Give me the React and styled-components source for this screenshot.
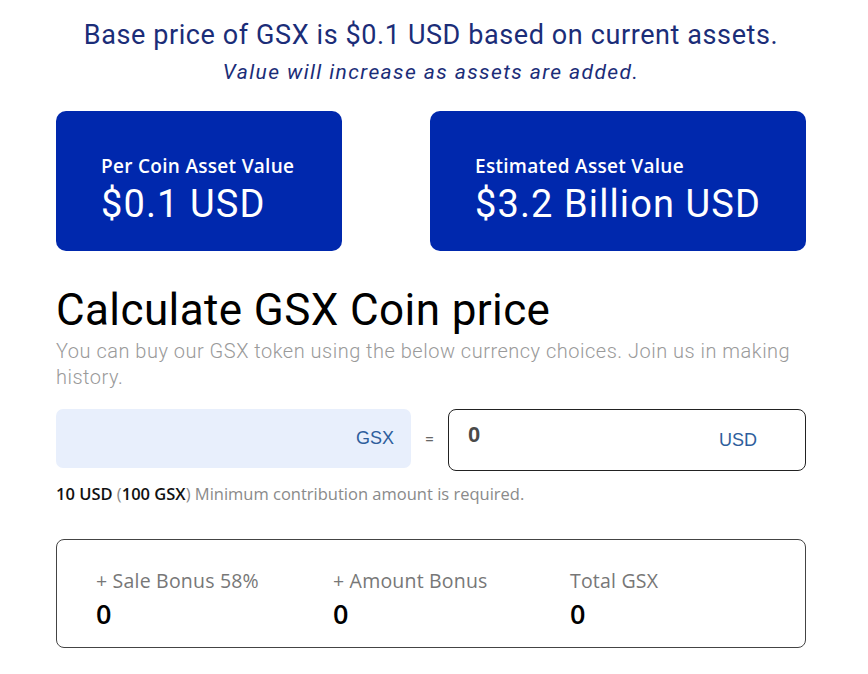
import styled, { createGlobalStyle } from "styled-components";

const GlobalStyle = createGlobalStyle`
  * { box-sizing: border-box; }
  body {
    margin: 0;
    background: #fff;
    font-family: Roboto, "Liberation Sans", sans-serif;
  }
`

const Page = styled.div`
  width : 750px;
  margin-left : 56px;
  padding-top : 18px;
  display : flex;
  flex-direction : column;
`

const Headline = styled.div`
  text-align : center;
  color : #1b2d78;
  font-size : 27px;
  letter-spacing : 0.6px;
  line-height : 34px;
`

const SubHeadline = styled.div`
  margin-top : 5px;
  text-align : center;
  color : #1b2d78;
  font-size : 21px;
  letter-spacing : 1.4px;
  font-style : italic;
  line-height : 30px;
`

const CardRow = styled.div`
  display : flex;
  justify-content : space-between;
  margin-top : 24px;
`

const ValueCard = styled.div`
  width : ${(props) => props.width};
  height : 140px;
  background-color : #0028ad;
  border-radius : 10px;
  padding : 43px 0 0 45px;
  color : #fff;
`

const CardLabel = styled.div`
  font-family : "Open Sans", Lato, sans-serif;
  font-weight : 600;
  font-size : 19px;
  letter-spacing : 0.3px;
  line-height : 24px;
`

const CardValue = styled.div`
  font-size : 38px;
  letter-spacing : 1.1px;
  line-height : 42px;
  margin-top : 5px;
`

const Title = styled.h1`
  margin : 33px 0 0 0;
  font-weight : 400;
  font-size : 44px;
  letter-spacing : 0.4px;
  line-height : 52px;
  color : #000;
`

const Subtitle = styled.p`
  margin : 2px 0 0 0;
  font-size : 20px;
  letter-spacing : 0.5px;
  line-height : 26px;
  color : #9a9a9a;
  font-weight : 300;
`

const ConvertRow = styled.div`
  display : flex;
  align-items : flex-start;
  margin-top : 19px;
`

const GsxField = styled.div`
  width : 355px;
  height : 59px;
  background-color : #e8effc;
  border-radius : 7px;
  display : flex;
  align-items : center;
  justify-content : flex-end;
  padding-right : 17px;
`

const Unit = styled.span`
  color : #2e5e9c;
  font-family : "Liberation Sans", Arial, sans-serif;
  font-size : 18px;
`

const Equals = styled.div`
  width : 37px;
  height : 59px;
  display : flex;
  align-items : center;
  justify-content : center;
  color : #666;
  font-size : 17px;
`

const UsdField = styled.div`
  width : 358px;
  height : 62px;
  border : 1px solid #222;
  border-radius : 8px;
  display : flex;
  justify-content : space-between;
  padding : 12px 48px 0 19px;
`

const Amount = styled.span`
  font-family : "Liberation Sans", Arial, sans-serif;
  font-weight : 700;
  font-size : 22px;
  color : #4a4a4a;
`

const UsdUnit = styled(Unit)`
  margin-top : 8px;
`

const Note = styled.div`
  margin-top : 13px;
  font-family : "Open Sans", sans-serif;
  font-size : 16.5px;
  line-height : 20px;
  color : #8a8a8a;
  b {
    color : #111;
    font-weight : 600;
  }
`

const BonusBox = styled.div`
  margin-top : 35px;
  height : 109px;
  border : 1px solid #444;
  border-radius : 8px;
  display : grid;
  grid-template-columns : 237px 237px 1fr;
  padding : 30px 0 0 39px;
`

const BonusItem = styled.div`
  display : flex;
  flex-direction : column;
`

const BonusLabel = styled.div`
  font-family : "Open Sans", sans-serif;
  font-size : 19.5px;
  letter-spacing : 0.2px;
  line-height : 22px;
  color : #777;
`

const BonusValue = styled.div`
  font-family : "Open Sans", sans-serif;
  font-weight : 600;
  font-size : 27px;
  line-height : 32px;
  margin-top : 6px;
  color : #000;
`

const bonuses = [
  { label: '+ Sale Bonus 58%', value: 0 },
  { label: '+ Amount Bonus', value: 0 },
  { label: 'Total GSX', value: 0 },
]

const App = () => {
  return (
    <>
      <GlobalStyle />
      <Page>
        <Headline>Base price of GSX is $0.1 USD based on current assets.</Headline>
        <SubHeadline>Value will increase as assets are added.</SubHeadline>
        <CardRow>
          <ValueCard width="286px">
            <CardLabel>Per Coin Asset Value</CardLabel>
            <CardValue>$0.1 USD</CardValue>
          </ValueCard>
          <ValueCard width="376px">
            <CardLabel>Estimated Asset Value</CardLabel>
            <CardValue>$3.2 Billion USD</CardValue>
          </ValueCard>
        </CardRow>
        <Title>Calculate GSX Coin price</Title>
        <Subtitle>You can buy our GSX token using the below currency choices. Join us in making history.</Subtitle>
        <ConvertRow>
          <GsxField><Unit>GSX</Unit></GsxField>
          <Equals>=</Equals>
          <UsdField>
            <Amount>0</Amount>
            <UsdUnit>USD</UsdUnit>
          </UsdField>
        </ConvertRow>
        <Note><b>10 USD</b> (<b>100 GSX</b>) Minimum contribution amount is required.</Note>
        <BonusBox>
          {bonuses.map((b, i) => (
            <BonusItem key={i}>
              <BonusLabel>{b.label}</BonusLabel>
              <BonusValue>{b.value}</BonusValue>
            </BonusItem>
          ))}
        </BonusBox>
      </Page>
    </>
  );
};

export default App;
